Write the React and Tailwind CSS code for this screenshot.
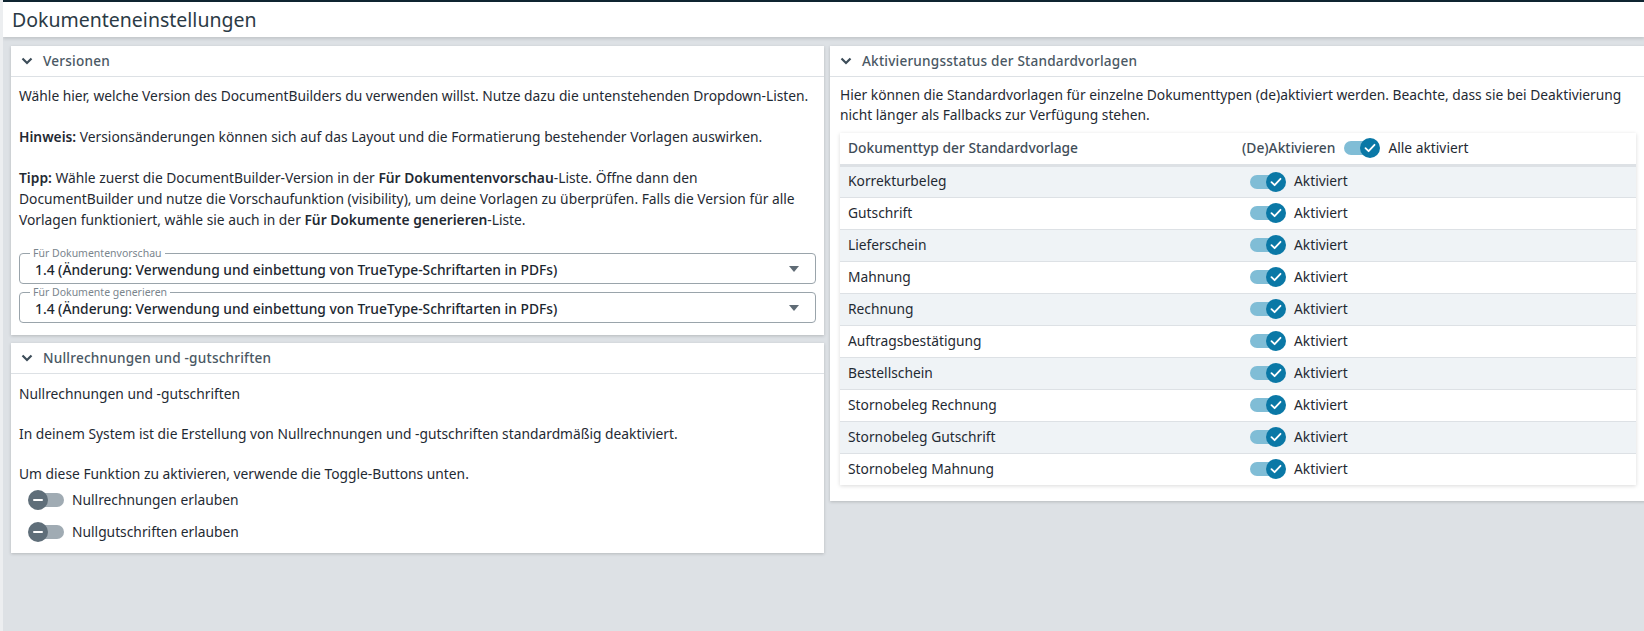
import React from 'react';

const docTypes = [
  'Korrekturbeleg',
  'Gutschrift',
  'Lieferschein',
  'Mahnung',
  'Rechnung',
  'Auftragsbestätigung',
  'Bestellschein',
  'Stornobeleg Rechnung',
  'Stornobeleg Gutschrift',
  'Stornobeleg Mahnung',
];

function Chevron() {
  return (
    <svg width="12" height="8" viewBox="0 0 12 8" className="shrink-0">
      <path d="M1.5 1.5 L6 6 L10.5 1.5" fill="none" stroke="#3d4d59" strokeWidth="2.2" />
    </svg>
  );
}

function Card({ title, children, className = '' }) {
  return (
    <section className={`bg-white shadow-[0_1px_3px_rgba(0,0,0,0.18)] ${className}`}>
      <header className="h-[31px] flex items-center gap-[10px] pl-[10px] border-b border-[#dde1e5]">
        <Chevron />
        <h2 className="text-[13.6px] font-medium tracking-[0.2px] text-[#4a5864]">{title}</h2>
      </header>
      {children}
    </section>
  );
}

function ToggleOn() {
  return (
    <span className="relative inline-flex items-center w-[36px] h-[20px] shrink-0">
      <span className="absolute left-0 top-[3px] w-[32px] h-[14px] rounded-full bg-[#80bdd6]" />
      <span className="absolute right-0 top-0 w-[20px] h-[20px] rounded-full bg-[#0a78a6] flex items-center justify-center">
        <svg width="12" height="10" viewBox="0 0 12 10">
          <path d="M1.5 5.2 L4.6 8.2 L10.5 1.8" fill="none" stroke="#fff" strokeWidth="1.8" strokeLinecap="round" strokeLinejoin="round" />
        </svg>
      </span>
    </span>
  );
}

function ToggleOff() {
  return (
    <span className="relative inline-flex items-center w-[36px] h-[20px] shrink-0">
      <span className="absolute right-0 top-[3px] w-[32px] h-[14px] rounded-full bg-[#a0abb3]" />
      <span className="absolute left-0 top-0 w-[20px] h-[20px] rounded-full bg-[#5f6e79] flex items-center justify-center">
        <span className="w-[10px] h-[2px] bg-white rounded-full" />
      </span>
    </span>
  );
}

function VersionSelect({ label }) {
  return (
    <div className="relative h-[31px] border border-[#9aa4ab] rounded-[4px] flex items-center pl-[15px] pr-[16px]">
      <span className="absolute -top-[8px] left-[10px] px-[3px] bg-white text-[10.5px] leading-[14px] text-[#7a858d]">{label}</span>
      <span className="flex-1 text-[13.8px] font-medium text-[#1c2730] pt-[2px]">
        1.4 (Änderung: Verwendung und einbettung von TrueType-Schriftarten in PDFs)
      </span>
      <svg width="10" height="6" viewBox="0 0 10 6">
        <path d="M0 0 H10 L5 6 Z" fill="#5f6b75" />
      </svg>
    </div>
  );
}

export default function App() {
  return (
    <div className="h-screen overflow-hidden bg-[#dde1e5] border-l-[3px] border-[#eceef0] text-[#1f2a33] font-['Noto_Sans',sans-serif]">
      <div className="h-[2px] bg-[#0f2531] -ml-[3px]" />
      <div className="h-[35px] bg-white flex items-center pl-[9px] shadow-[0_2px_3px_rgba(0,0,0,0.12)]">
        <h1 className="text-[19.5px] text-[#2b3a45]">Dokumenteneinstellungen</h1>
      </div>

      <div className="flex items-start gap-[6px] pt-[9px] pl-[8px]">
        <div className="w-[813px] shrink-0 flex flex-col gap-[8px]">
          <Card title="Versionen">
            <div className="px-[8px] pt-[8px] pb-[12px] text-[13.8px] leading-[21px]">
              <p>Wähle hier, welche Version des DocumentBuilders du verwenden willst. Nutze dazu die untenstehenden Dropdown-Listen.</p>
              <p className="mt-[20px]">
                <b className="font-semibold">Hinweis:</b> Versionsänderungen können sich auf das Layout und die Formatierung bestehender Vorlagen auswirken.
              </p>
              <p className="mt-[20px]">
                <b className="font-semibold">Tipp:</b> Wähle zuerst die DocumentBuilder-Version in der <b className="font-semibold">Für Dokumentenvorschau</b>-Liste. Öffne dann den
                <br />
                DocumentBuilder und nutze die Vorschaufunktion (visibility), um deine Vorlagen zu überprüfen. Falls die Version für alle Vorlagen funktioniert, wähle sie auch in der <b className="font-semibold">Für Dokumente generieren</b>-Liste.
              </p>
              <div className="mt-[23px] flex flex-col gap-[8px]">
                <VersionSelect label="Für Dokumentenvorschau" />
                <VersionSelect label="Für Dokumente generieren" />
              </div>
            </div>
          </Card>

          <Card title="Nullrechnungen und -gutschriften">
            <div className="px-[8px] pt-[9px] pb-[11px] text-[13.8px] leading-[21px]">
              <p>Nullrechnungen und -gutschriften</p>
              <p className="mt-[19px]">In deinem System ist die Erstellung von Nullrechnungen und -gutschriften standardmäßig deaktiviert.</p>
              <p className="mt-[19px]">Um diese Funktion zu aktivieren, verwende die Toggle-Buttons unten.</p>
              <div className="mt-[5px] pl-[9px] flex flex-col gap-[11px]">
                <label className="flex items-center gap-[8px]">
                  <ToggleOff />
                  <span>Nullrechnungen erlauben</span>
                </label>
                <label className="flex items-center gap-[8px]">
                  <ToggleOff />
                  <span>Nullgutschriften erlauben</span>
                </label>
              </div>
            </div>
          </Card>
        </div>

        <Card title="Aktivierungsstatus der Standardvorlagen" className="w-[816px] shrink-0">
          <div className="px-[10px] pt-[8px] pb-[16px]">
            <p className="text-[13.8px] leading-[20px]">
              Hier können die Standardvorlagen für einzelne Dokumenttypen (de)aktiviert werden. Beachte, dass sie bei Deaktivierung nicht länger als Fallbacks zur Verfügung stehen.
            </p>
            <table className="mt-[8px] w-[796px] border-collapse shadow-[0_1px_4px_rgba(0,0,0,0.15)] text-[13.8px]">
              <thead>
                <tr className="h-[32px] border-b-[3px] border-[#dde1e5] bg-white">
                  <th className="w-[394px] text-left font-medium text-[#3f4d58] pl-[8px]">Dokumenttyp der Standardvorlage</th>
                  <th className="text-left font-medium text-[#3f4d58] pl-[8px]">
                    <span className="flex items-center">
                      <span>(De)Aktivieren</span>
                      <span className="ml-[9px] flex items-center gap-[8px] font-normal text-[#1f2a33]">
                        <ToggleOn />
                        Alle aktiviert
                      </span>
                    </span>
                  </th>
                </tr>
              </thead>
              <tbody>
                {docTypes.map((name, i) => (
                  <tr key={name} className={`h-[32px] border-b border-[#dde1e5] last:border-b-0 ${i % 2 === 0 ? 'bg-[#eff3f6]' : 'bg-white'}`}>
                    <td className="pl-[8px]">{name}</td>
                    <td className="pl-[16px]">
                      <span className="flex items-center gap-[8px]">
                        <ToggleOn />
                        Aktiviert
                      </span>
                    </td>
                  </tr>
                ))}
              </tbody>
            </table>
          </div>
        </Card>
      </div>
    </div>
  );
}
